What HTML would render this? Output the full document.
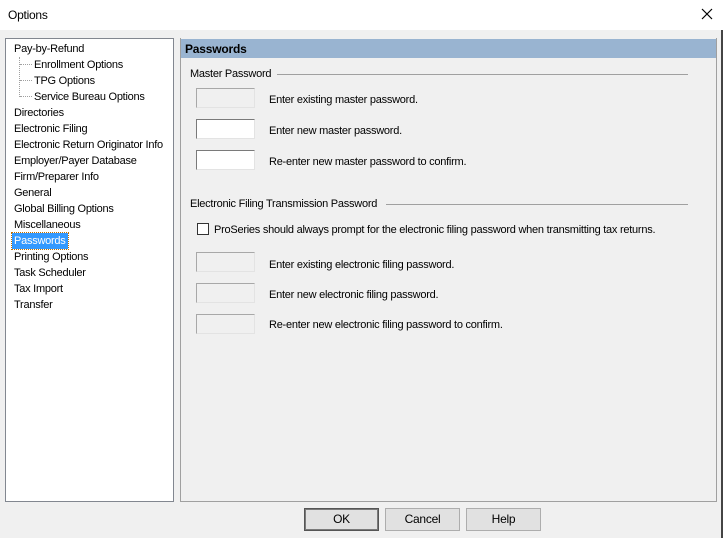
<!DOCTYPE html>
<html><head><meta charset="utf-8"><style>
*{margin:0;padding:0;box-sizing:border-box}
body{width:723px;height:538px;background:#f0f0f0;font-family:"Liberation Sans",Arial,sans-serif;font-size:11px;letter-spacing:-0.25px;color:#000;position:relative;overflow:hidden}
.a{position:absolute;white-space:nowrap}
.title{left:0;top:0;width:723px;height:30px;background:#fff}
.tree{left:5px;top:38px;width:169px;height:464px;background:#fff;border:1px solid #828790}
.ti{position:absolute;left:8px;line-height:16px}
.sub{left:28px}
.panel{left:180px;top:38px;width:537px;height:464px;border:1px solid #a0a0a0;border-top:none}
.hdr{left:181px;top:39px;width:535px;height:19px;background:#99b4d1;font-weight:bold;font-size:12px;letter-spacing:-0.2px;padding:3px 0 0 4px}
.box{position:absolute;width:59px;height:20px;border:1px solid #7a7a7a;border-right-color:#e3e3e3;border-bottom-color:#e3e3e3;background:#fff}
.dis{background:#f0f0f0;border-color:#a8a8a8;border-right-color:#e3e3e3;border-bottom-color:#e3e3e3}
.lbl{position:absolute;left:269px}
.line{position:absolute;height:1px;background:#a0a0a0}
.btn{position:absolute;top:508px;width:75px;height:23px;border:1px solid #adadad;background:#e1e1e1;text-align:center;line-height:21px;font-size:12px}
</style></head><body>
<div class="a title"></div>
<div class="a" style="left:8px;top:8px;font-size:12px">Options</div>
<svg class="a" style="left:701px;top:8px" width="12" height="12"><path d="M1 1L11 11M11 1L1 11" stroke="#000" stroke-width="1.2"/></svg>
<div class="a" style="left:721px;top:30px;width:2px;height:508px;background:#444"></div>

<div class="a tree">
<div class="ti" style="top:2px">Pay-by-Refund</div>
<div style="position:absolute;left:13px;top:18px;width:1px;height:40px;border-left:1px dotted #a0a0a0"></div>
<div style="position:absolute;left:14px;top:25px;width:12px;border-top:1px dotted #a0a0a0"></div>
<div style="position:absolute;left:14px;top:41px;width:12px;border-top:1px dotted #a0a0a0"></div>
<div style="position:absolute;left:14px;top:57px;width:12px;border-top:1px dotted #a0a0a0"></div>
<div class="ti sub" style="top:18px">Enrollment Options</div>
<div class="ti sub" style="top:34px">TPG Options</div>
<div class="ti sub" style="top:50px">Service Bureau Options</div>
<div class="ti" style="top:66px">Directories</div>
<div class="ti" style="top:82px">Electronic Filing</div>
<div class="ti" style="top:98px">Electronic Return Originator Info</div>
<div class="ti" style="top:114px">Employer/Payer Database</div>
<div class="ti" style="top:130px">Firm/Preparer Info</div>
<div class="ti" style="top:146px">General</div>
<div class="ti" style="top:162px">Global Billing Options</div>
<div class="ti" style="top:178px">Miscellaneous</div>
<div class="ti" style="top:194px;left:6px;padding:0 2px;background:#3399ff;color:#fff;outline:1px dotted #c07000">Passwords</div>
<div class="ti" style="top:210px">Printing Options</div>
<div class="ti" style="top:226px">Task Scheduler</div>
<div class="ti" style="top:242px">Tax Import</div>
<div class="ti" style="top:258px">Transfer</div>
</div>

<div class="a panel"></div>
<div class="a hdr">Passwords</div>

<div class="a" style="left:190px;top:68px">Master Password</div>
<div class="line" style="left:277px;top:74px;width:411px"></div>
<div class="box dis" style="left:196px;top:88px"></div>
<div class="box" style="left:196px;top:119px"></div>
<div class="box" style="left:196px;top:150px"></div>
<div class="a lbl" style="top:94px">Enter existing master password.</div>
<div class="a lbl" style="top:125px">Enter new master password.</div>
<div class="a lbl" style="top:156px">Re-enter new master password to confirm.</div>

<div class="a" style="left:190px;top:198px">Electronic Filing Transmission Password</div>
<div class="line" style="left:386px;top:204px;width:302px"></div>
<div class="a" style="left:197px;top:223px;width:12px;height:12px;border:1px solid #333;background:#fff"></div>
<div class="a" style="left:214px;top:224px">ProSeries should always prompt for the electronic filing password when transmitting tax returns.</div>
<div class="box dis" style="left:196px;top:252px"></div>
<div class="box dis" style="left:196px;top:283px"></div>
<div class="box dis" style="left:196px;top:314px"></div>
<div class="a lbl" style="top:259px">Enter existing electronic filing password.</div>
<div class="a lbl" style="top:289px">Enter new electronic filing password.</div>
<div class="a lbl" style="top:319px">Re-enter new electronic filing password to confirm.</div>

<div class="btn" style="left:304px;border:1px solid #555;box-shadow:inset 0 0 0 1px #7a7a7a">OK</div>
<div class="btn" style="left:385px">Cancel</div>
<div class="btn" style="left:466px">Help</div>
</body></html>
